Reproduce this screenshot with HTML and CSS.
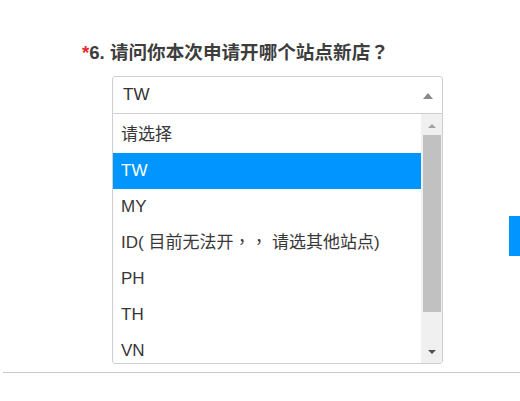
FILE: index.html
```html
<!DOCTYPE html>
<html lang="zh-CN">
<head>
<meta charset="utf-8">
<link rel="stylesheet" href="styles.css">
</head>
<body>
<div class="page">
  <section class="question">
    <h2 class="q-title"><span class="req">*</span>6. 请问你本次申请开哪个站点新店<span class="punct" lang="zh-TW">？</span></h2>
    <div class="select">
      <div class="select-box">
        <span class="select-value">TW</span>
        <span class="caret-up"></span>
      </div>
      <div class="dropdown">
        <ul class="options">
          <li class="option">请选择</li>
          <li class="option active">TW</li>
          <li class="option">MY</li>
          <li class="option">ID( 目前无法开<span class="punct" lang="zh-TW">，，</span> 请选其他站点)</li>
          <li class="option">PH</li>
          <li class="option">TH</li>
          <li class="option">VN</li>
        </ul>
        <div class="scrollbar">
          <span class="sb-up"></span>
          <div class="sb-track"><div class="sb-thumb"></div></div>
          <span class="sb-down"></span>
        </div>
      </div>
    </div>
  </section>
  <hr class="divider">
  <div class="side-tab"></div>
</div>
</body>
</html>
```

FILE: styles.css
```css
html, body {
  margin: 0;
  padding: 0;
  background: #fff;
}
body {
  font-family: "Liberation Sans", "Noto Sans CJK SC", Arial, sans-serif;
  color: #333;
}
.page {
  position: relative;
  width: 520px;
  height: 401px;
  overflow: hidden;
}
.question {
  padding: 40px 0 0 82px;
  height: 332px;
  box-sizing: border-box;
}
.q-title {
  margin: 0;
  height: 26px;
  font-size: 18.6px;
  line-height: 26px;
  font-weight: bold;
  color: #3d3d3d;
  white-space: nowrap;
}
.punct {
  font-family: "Noto Sans CJK TC", "Noto Sans CJK SC", sans-serif;
  line-height: 1;
}
.req {
  color: #e8262e;
  font-weight: bold;
}
.select {
  position: relative;
  margin: 10px 0 0 30px;
  width: 331px;
}
.select-box {
  box-sizing: border-box;
  height: 38px;
  border: 1px solid #cfcfcf;
  border-radius: 3px 3px 0 0;
  display: flex;
  align-items: center;
  justify-content: space-between;
  padding: 0 9px 0 10px;
  font-size: 17px;
  color: #333;
}
.select-value {
  line-height: 20px;
}
.caret-up {
  width: 0;
  height: 0;
  border-left: 5px solid transparent;
  border-right: 5px solid transparent;
  border-bottom: 6px solid #8a8a8a;
  margin-top: 2px;
}
.dropdown {
  position: absolute;
  left: 0;
  top: 37px;
  width: 331px;
  height: 251px;
  box-sizing: border-box;
  border: 1px solid #cfcfcf;
  border-radius: 0 0 3px 3px;
  background: #fff;
  display: flex;
  overflow: hidden;
}
.options {
  list-style: none;
  margin: 0;
  padding: 3px 0 0;
  flex: 1;
  overflow: hidden;
}
.option {
  height: 36px;
  line-height: 36px;
  padding-left: 8px;
  font-size: 17px;
  color: #383838;
  white-space: nowrap;
  overflow: hidden;
}
.option.active {
  background: #0095ff;
  color: #fff;
}
.scrollbar {
  width: 21px;
  background: #f0f0f0;
  display: flex;
  flex-direction: column;
  align-items: center;
}
.sb-up {
  margin-top: 10px;
  width: 0;
  height: 0;
  border-left: 4px solid transparent;
  border-right: 4px solid transparent;
  border-bottom: 4px solid #a3a3a3;
}
.sb-track {
  flex: 1;
  width: 100%;
  padding: 7px 1px 0 2px;
  box-sizing: border-box;
}
.sb-thumb {
  height: 177px;
  background: #c1c1c1;
}
.sb-down {
  margin-bottom: 9px;
  width: 0;
  height: 0;
  border-left: 4px solid transparent;
  border-right: 4px solid transparent;
  border-top: 4px solid #505050;
}
.divider {
  margin: 40px 0 0 3px;
  border: 0;
  border-top: 1px solid #c8c8c8;
  height: 0;
}
.side-tab {
  position: absolute;
  right: 0;
  top: 216px;
  width: 11px;
  height: 40px;
  background: #0095ff;
}
```
